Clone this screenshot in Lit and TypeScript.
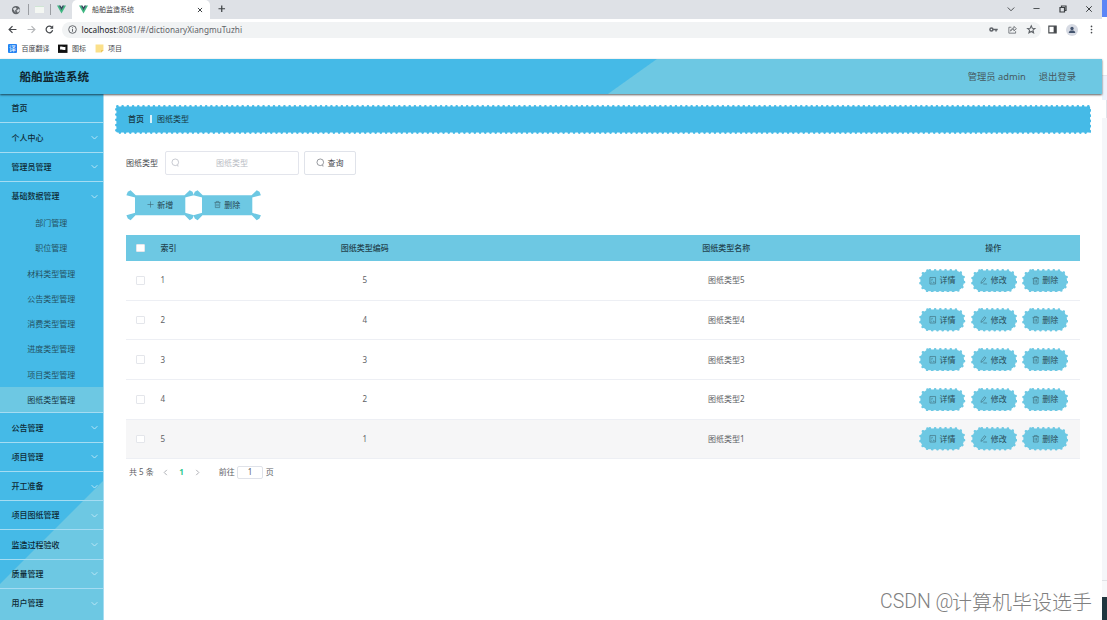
import { LitElement, html, css, svg } from "lit";
import { customElement, property } from "lit/decorators.js";

const glyphs: Record<string, unknown> = {
  globe: svg`<circle cx="8" cy="8" r="6.6" fill="#5f6368"/><path d="M3 6l4-2 2 2-3 3 1 3M9 9l4-3 1 3-3 3z" fill="#dee1e6" stroke="#dee1e6" stroke-width="0.5"/>`,
  vue: svg`<path d="M0 1h3.6L8 8.6 12.4 1H16L8 15z" fill="#41b883"/><path d="M3.2 1h3L8 4.2 9.800 1h3L8 9.300z" fill="#35495e"/>`,
  back: svg`<path d="M15 8H2M8 2L2 8l6 6" class="s"/>`,
  forward: svg`<path d="M1 8h13M8 2l6 6-6 6" class="s"/>`,
  reload: svg`<path d="M13.500 9A5.800 5.800 0 1 1 12 4" class="s"/><path d="M14.500 0.500v6h-6z" fill="currentColor"/>`,
  info: svg`<circle cx="8" cy="8" r="6.800" class="s"/><path d="M8 7v5M8 4v1.600" class="s"/>`,
  close: svg`<path d="M2.500 2.500l11 11M13.500 2.500l-11 11" class="s"/>`,
  plus: svg`<path d="M8 1v14M1 8h14" class="s"/>`,
  minus: svg`<path d="M1 8h14" class="s"/>`,
  restore: svg`<path d="M2 5h9v9H2zM5 5V2h9v9h-3" class="s"/>`,
  down: svg`<path d="M1.500 5L8 11.500 14.500 5" class="s"/>`,
  left: svg`<path d="M11 2L5 8l6 6" class="s"/>`,
  right: svg`<path d="M5 2l6 6-6 6" class="s"/>`,
  key: svg`<circle cx="4.300" cy="8" r="2.700" class="s"/><path d="M7 8h8.500M12.500 8v3.500" class="s"/>`,
  share: svg`<path d="M6 4H1.500v10.500h12V11M4.500 11c.5-4 3-5.500 6-5.500V2.500L15 6.500l-4.500 4v-3c-3 0-4.500 1-6 3.500z" class="s"/>`,
  star: svg`<path d="M8 1.500l2 4.600 5 .4-3.800 3.300 1.200 4.900L8 12.100l-4.400 2.600 1.200-4.900L1 6.500l5-.4z" class="s"/>`,
  panel: svg`<path d="M1.500 2h13v12h-13z" class="s"/><path d="M10 2h4.500v12H10z" fill="currentColor"/>`,
  user: svg`<circle cx="8" cy="5" r="3.300" fill="currentColor"/><path d="M1.500 14c0-4.500 3-5 6.500-5s6.500.5 6.500 5z" fill="currentColor"/>`,
  more: svg`<g fill="currentColor"><circle cx="8" cy="2.500" r="1.500"/><circle cx="8" cy="8" r="1.500"/><circle cx="8" cy="13.500" r="1.500"/></g>`,
  flag: svg`<path d="M0 1h16v14H0z" fill="#111"/><path d="M3.500 12V4.500c3-1.500 5 1.500 9 0v5c-4 1.500-6-1.500-9 0" fill="#fff"/>`,
  note: svg`<path d="M1 1h14v10l-4 4H1z" fill="#fbe08a"/><path d="M15 11l-4 4v-4z" fill="#e5bd4c"/>`,
  search: svg`<circle cx="7.600" cy="7.600" r="5.900" class="s"/><path d="M10.500 13.500l3 .8" class="s"/>`,
  trash: svg`<path d="M1 3.500h14M5 3.500V1h6v2.500M3 3.500V15h10V3.500M6.500 6.500v5.500M9.500 6.500v5.500" class="s"/>`,
  doc: svg`<path d="M2 1h12v14H2zM5 5h3M5 8h2M5 12h1.500M9.500 12v-2M12 12H9.500" class="s"/>`,
  edit: svg`<path d="M3 9.500L9.500 1.500l3 2.300L6 12l-4 1.500zM7 15h8" class="s"/>`,
};

@customElement("ui-icon")
export class UiIcon extends LitElement {
  @property() name = "";
  @property({ type: Number }) size = 9;
  @property({ type: Number }) weight = 1.5;
  static styles = css`
    :host { display: inline-flex; flex: none; }
    svg { display: block; overflow: visible; }
    .s { fill: none; stroke: currentColor; }
  `;
  render() {
    return html`<svg width=${this.size} height=${this.size} viewBox="0 0 16 16" stroke-width=${this.weight}>${glyphs[this.name]}</svg>`;
  }
}

@customElement("dotted-box")
export class DottedBox extends LitElement {
  @property() fill = "#6dc8e3";
  @property({ type: Number }) radius = 0;
  @property({ type: Number }) w = 46;
  @property({ type: Number }) h = 23;
  static styles = css`
    :host { display: grid; }
    svg, .body { grid-area: 1 / 1; }
    svg { display: block; }
    .body { display: flex; align-items: center; }
  `;
  render() {
    const { w, h, radius: r, fill } = this;
    return html`<svg width=${w} height=${h}>
        <rect x="1.4" y="1.4" width=${w - 2.8} height=${h - 2.8} rx=${r} fill=${fill}></rect>
        <rect x="1.4" y="1.4" width=${w - 2.8} height=${h - 2.8} rx=${r} fill="none" stroke=${fill}
          stroke-width="2.7" stroke-linecap="round" stroke-dasharray="0 5.22"></rect>
      </svg>
      <div class="body"><slot></slot></div>`;
  }
}

@customElement("app-root")
export class AppRoot extends LitElement {
  static styles = css`
    :host {
      display: block; width: 1107px; height: 620px; overflow: hidden; position: relative;
      background: #fff; color: #606266; font: 8px/1 "Noto Sans", "Noto Sans CJK SC", sans-serif;
    }
    * { box-sizing: border-box; }
    .screen { display: flex; height: 620px; }
    .window { width: 1102px; flex: none; display: flex; flex-direction: column; }
    .strip { flex: 1; display: flex; flex-direction: column; }
    .strip .a { height: 17px; background: #5c86f6; }
    .strip .b { height: 59px; background: #fff; border-bottom: 1px solid #e3e6ee; }
    .strip .c { height: 24px; background: #eef2fc; }
    .strip .d { height: 18px; background: #e1e4ea; margin-left: 4px; }
    .strip .e { flex: 1; background: #f5f6f9; border-bottom: 1px solid #e0e2e6; }
    .strip .f { height: 16px; background: #f7f8fa; }
    .strip .g { height: 23px; background: #20363f; }

    .tabs { height: 19px; background: #dee1e6; display: flex; align-items: center; color: #3c4043; }
    .pinned { width: 72px; display: flex; align-items: center; padding-left: 11px; }
    .sep { width: 1px; height: 11px; background: #9a9da2; }
    .pinned .sep:nth-of-type(1) { margin: 0 6px 0 7px; }
    .blank { width: 9px; height: 7px; background: #f4f7f3; border-top: 1px solid #cfe5d4; }
    .pinned .two { margin: 0 6px; }
    .tab { width: 138px; height: 19px; background: #fff; border-radius: 5px 5px 0 0; display: flex; align-items: center; padding: 0 7px; font-size: 7px; }
    .tab span { flex: 1; margin-left: 4px; }
    .add { margin-left: 8px; flex: 1; }
    .winctl { display: flex; gap: 18.500px; margin-right: 9px; align-items: center; margin-top: -2px; }

    .address { height: 21px; display: flex; align-items: center; padding-left: 8px; color: #45484c; }
    .nav { display: flex; gap: 9.500px; align-items: center; width: 54px; }
    .nav .dim { color: #b5b7ba; }
    .url { width: 979px; height: 16px; border-radius: 8px; background: #f1f3f4; display: flex; align-items: center; padding: 0 6px; color: #5f6368; font-size: 8.200px; }
    .url .text { flex: 1; margin-left: 4.500px; letter-spacing: 0.020px; padding-top: 1px; }
    .url b { font-weight: 400; color: #202124; }
    .url .tools { display: flex; gap: 10px; }
    .ext { display: flex; align-items: center; gap: 9px; margin-left: 7px; }
    .avatar { width: 12px; height: 12px; border-radius: 50%; background: #d6dae3; display: grid; place-items: center; color: #44546e; }
    .marks { height: 19px; display: flex; align-items: center; padding: 0 0 2px 8px; font-size: 7px; color: #45484c; }
    .marks span { margin: 0 8.500px 0 4.500px; }
    .marks .fy { width: 9px; height: 9px; margin: 0; background: #2383f2; color: #fff; font-size: 7px; display: grid; place-items: center; border-radius: 1px; }

    .header {
      height: 35px; flex: none; display: flex; align-items: center; z-index: 2; padding: 0 26px 0 19.500px;
      background: linear-gradient(144.500deg, #45bae7 381px, #6dc8e3 382px);
      box-shadow: 0 1px 2px rgba(0, 0, 0, 0.65);
    }
    .header h1 { flex: 1; margin: 0; font-size: 11.600px; font-weight: 700; color: #10252e; }
    .header span { font-size: 9.300px; color: #46585f; margin-left: 13px; }
    .app { flex: 1; display: flex; min-height: 0; }

    .side { width: 103.500px; flex: none; height: 526px; overflow: hidden; border-right: 1px solid #a5dcf2; background: linear-gradient(135deg, #45bae7 346px, #6dc8e3 347px); color: #0e2a36; font-weight: 500; }
    .group { height: 29.250px; border-bottom: 1.400px solid #a5dcf2; display: flex; align-items: center; justify-content: space-between; padding: 0 5px 0 11.500px; }
    .group:first-child { height: 29.400px; }
    .group:last-child { border-bottom: 0; height: 28.500px; }
    .group ui-icon { color: #bce7f6; }
    .group.open { border-bottom: 0; height: 28.600px; }
    .sub { height: 25.250px; display: flex; align-items: center; justify-content: center; color: #24515f; font-weight: 400; }
    .sub.on { background: #6dc8e3; color: #16343f; }
    .subs { border-bottom: 1.400px solid #a5dcf2; }

    .main { flex: 1; padding: 10.500px 0 0 11px; }
    .crumb { font-size: 8px; color: #173540; }
    .crumb div { display: flex; align-items: center; padding-left: 13.500px; font-weight: 500; }
    .crumb span { font-weight: 400; }
    .crumb i { width: 1.500px; height: 8px; background: #d9f1fa; margin: 0 5.500px 0 6px; }
    .content { padding: 17px 23px 0 11.500px; }
    .filter { display: flex; align-items: center; height: 24px; color: #45484d; }
    .input { width: 134px; height: 24px; margin: 0 5px 0 6.500px; border: 1px solid #e3e5ec; border-radius: 2px; display: flex; align-items: center; padding: 0 5px; color: #b9bcc4; }
    .input span { flex: 1; text-align: center; padding-right: 8px; }
    .query { width: 52px; height: 24px; border: 1px solid #e0e3ea; border-radius: 2px; display: flex; align-items: center; justify-content: center; gap: 3px; }
    .query ui-icon { color: #7b7e84; }
    .bulk { display: flex; margin-top: 16px; height: 28px; margin-left: 1px; }
    .fan { display: grid; width: 67px; height: 28px; color: #24444f; }
    .fan > * { grid-area: 1 / 1; }
    .fan svg { overflow: visible; }
    .fan span { display: flex; align-items: center; justify-content: center; gap: 3.500px; padding-right: 1px; z-index: 1; }
    .fan ui-icon, .lab ui-icon { color: #3f6977; }

    .table { margin-top: 16.900px; width: 953.500px; }
    .row { display: grid; grid-template-columns: 29px 29px 361.500px 361.500px 1fr; align-items: center; height: 39.650px; border-bottom: 1px solid #edeff4; }
    .row > * { text-align: center; }
    .row > .idx { text-align: left; padding-left: 5.500px; }
    .row.head { height: 25.700px; background: #6dc8e3; color: #24444f; font-weight: 500; border: 0; }
    .row.hover { background: #f6f6f7; }
    .box { width: 8.500px; height: 8.500px; background: #fff; border: 1px solid #e4e6eb; border-radius: 1px; justify-self: center; }
    .ops { display: flex; gap: 5px; justify-content: center; padding-left: 1px; }
    .ops .lab { display: flex; gap: 3px; align-items: center; justify-content: center; width: 46px; color: #2b4b56; }
    .pager { display: flex; align-items: center; height: 13px; margin-top: 6.500px; padding-left: 3px; }
    .pager .cur { color: #2bc78e; font-weight: 700; margin: 0 10px; }
    .pager ui-icon { color: #a2a5ab; }
    .pager .first { margin-left: 8.500px; }
    .pager .go { margin: 0 2px 0 18px; }
    .pager .num { width: 26.500px; height: 13px; border: 1px solid #dfe2e9; border-radius: 2px; display: grid; place-items: center; margin-right: 2.500px; }
    .mark { position: absolute; left: 880px; top: 591px; display: flex; font: 300 20px/22px "Noto Sans CJK SC", sans-serif; color: #808080; white-space: nowrap; text-shadow: 1px 1px 0 #fff; }
    .mark span { width: 72px; font-family: Roboto, sans-serif; font-size: 19.500px; }
  `;

  private icon(name: string, size = 9, weight = 1.5, cls = "") {
    return html`<ui-icon class=${cls} name=${name} .size=${size} .weight=${weight}></ui-icon>`;
  }
  private group(label: string, arrow = true, open = false) {
    return html`<div class="group ${open ? "open" : ""}">${label}${arrow ? this.icon("down", 7, 2.2) : ""}</div>`;
  }
  private fan(name: string, label: string) {
    return html`<div class="fan"><svg width="67" height="28" fill="#6dc8e3">
        <rect x="8" y="4.200" width="50.300" height="20" rx="1"></rect>
        <path d="M-.6 4.200L.8 .8 3.600 -.8 9 4.600 8.300 6.600zM66.900 4.200L65.500 .8 62.700 -.8 57.300 4.600 58 6.600zM-.6 24.200L.8 27.600 3.600 29.200 9 23.800 8.300 21.800zM66.900 24.200L65.500 27.600 62.700 29.200 57.300 23.800 58 21.800z"></path>
      </svg><span>${this.icon(name, 7, 1.4)}${label}</span></div>`;
  }
  private op(name: string, label: string) {
    return html`<dotted-box .w=${46.4} .h=${23.6} .radius=${9.5}><div class="lab">${this.icon(name, 7.5, 1.3)}<span>${label}</span></div></dotted-box>`;
  }

  render() {
    const subs = ["部门管理", "职位管理", "材料类型管理", "公告类型管理", "消费类型管理", "进度类型管理", "项目类型管理", "图纸类型管理"];
    const rest = ["公告管理", "项目管理", "开工准备", "项目图纸管理", "监造过程验收", "质量管理", "用户管理"];
    return html`
      <div class="screen">
        <div class="window">
          <div class="tabs">
            <div class="pinned">${this.icon("globe", 10)}<div class="sep"></div><div class="blank"></div><div class="sep two"></div>${this.icon("vue", 9)}</div>
            <div class="tab">${this.icon("vue", 9)}<span>船舶监造系统</span>${this.icon("close", 6, 2.6)}</div>
            <div class="add">${this.icon("plus", 7.5, 2.6)}</div>
            <div class="winctl">${this.icon("down", 8, 1.8)}${this.icon("minus", 7, 2)}${this.icon("restore", 8, 2.4)}${this.icon("close", 8, 2)}</div>
          </div>
          <div class="address">
            <div class="nav">${this.icon("back", 9, 2.2)}${this.icon("forward", 9, 2.2, "dim")}${this.icon("reload", 9, 2.2)}</div>
            <div class="url">${this.icon("info", 9, 1.7)}<div class="text"><b>localhost</b>:8081/#/dictionaryXiangmuTuzhi</div>
              <div class="tools">${this.icon("key", 9, 2.6)}${this.icon("share", 9, 1.4)}${this.icon("star", 8.5, 2)}</div></div>
            <div class="ext">${this.icon("panel", 9, 2)}<div class="avatar">${this.icon("user", 8)}</div>${this.icon("more", 9)}</div>
          </div>
          <div class="marks"><span class="fy">译</span><span>百度翻译</span>${this.icon("flag", 9.5)}<span>图标</span>${this.icon("note", 9)}<span>项目</span></div>
          <div class="header"><h1>船舶监造系统</h1><span>管理员 admin</span><span>退出登录</span></div>
          <div class="app">
            <div class="side">
              ${this.group("首页", false)}${this.group("个人中心")}${this.group("管理员管理")}${this.group("基础数据管理", true, true)}
              <div class="subs">${subs.map((s, i) => html`<div class="sub ${i === 7 ? "on" : ""}">${s}</div>`)}</div>
              ${rest.map((s) => this.group(s))}
            </div>
            <div class="main">
              <dotted-box class="crumb" fill="#45bae7" .w=${976.5} .h=${29} .radius=${1}><div>首页<i></i><span>图纸类型</span></div></dotted-box>
              <div class="content">
                <div class="filter">图纸类型<div class="input">${this.icon("search", 9, 1.4)}<span>图纸类型</span></div>
                  <div class="query">${this.icon("search", 9, 1.4)}查询</div></div>
                <div class="bulk">${this.fan("plus", "新增")}${this.fan("trash", "删除")}</div>
                <div class="table">
                  <div class="row head"><div class="box"></div><div class="idx">索引</div><div>图纸类型编码</div><div>图纸类型名称</div><div>操作</div></div>
                  ${[5, 4, 3, 2, 1].map((n, i) => html`<div class="row ${n === 1 ? "hover" : ""}">
                    <div class="box"></div><div class="idx">${i + 1}</div><div>${n}</div><div>图纸类型${n}</div>
                    <div class="ops">${this.op("doc", "详情")}${this.op("edit", "修改")}${this.op("trash", "删除")}</div></div>`)}
                </div>
                <div class="pager">共 5 条${this.icon("left", 7, 2, "first")}<span class="cur">1</span>${this.icon("right", 7, 2)}<span class="go">前往</span><div class="num">1</div>页</div>
              </div>
            </div>
          </div>
        </div>
        <div class="strip"><div class="a"></div><div class="b"></div><div class="c"></div><div class="d"></div><div class="e"></div><div class="f"></div><div class="g"></div></div>
      </div>
      <div class="mark"><span>CSDN @</span>计算机毕设选手</div>
    `;
  }
}
